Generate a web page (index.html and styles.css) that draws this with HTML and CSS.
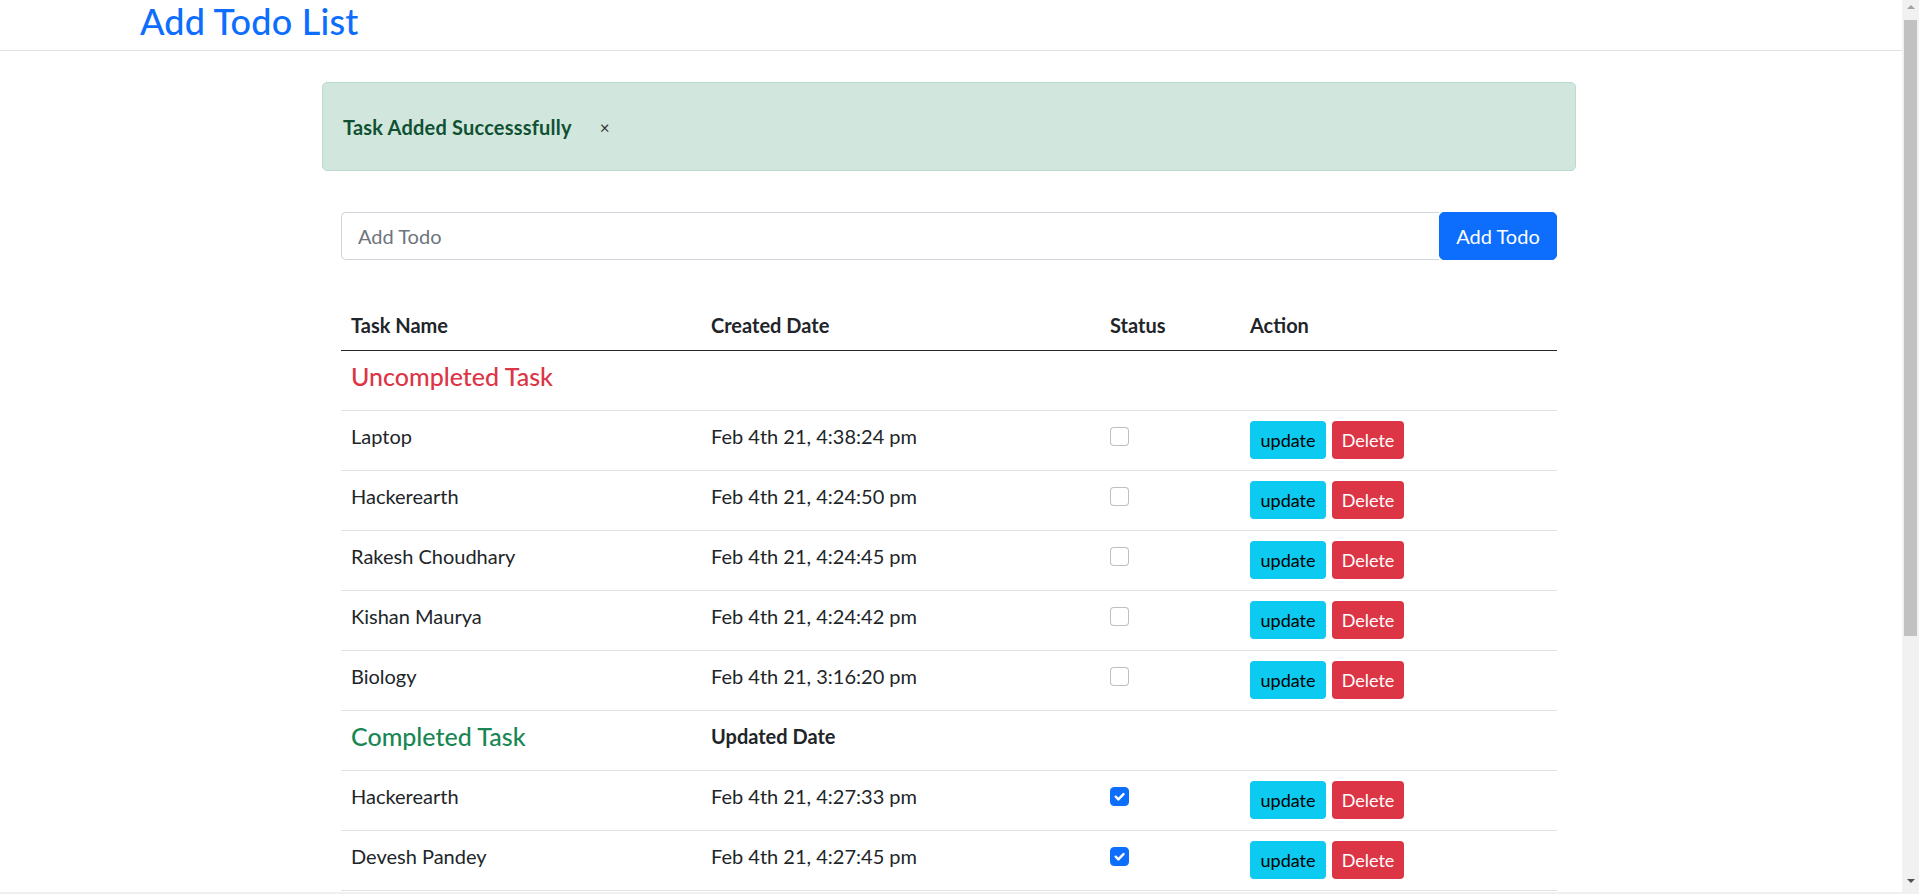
FILE: index.html
```html
<!DOCTYPE html>
<html lang="en">
<head>
<meta charset="utf-8">
<title>Add Todo List</title>
<link rel="stylesheet" href="styles.css">
</head>
<body>
<div class="window">
  <div class="viewport">
    <header class="topbar">
      <h1 class="brand">Add Todo List</h1>
    </header>
    <main class="container">
      <div class="alert">
        <strong>Task Added Successsfully</strong>
        <button class="alert-close" type="button">×</button>
      </div>
      <div class="inner">
        <form class="input-group">
          <input class="form-control" type="text" placeholder="Add Todo">
          <button class="btn-add" type="button">Add Todo</button>
        </form>
        <table class="table">
          <colgroup>
            <col class="c-name"><col class="c-date"><col class="c-status"><col class="c-action">
          </colgroup>
          <thead>
            <tr><th>Task Name</th><th>Created Date</th><th>Status</th><th>Action</th></tr>
          </thead>
          <tbody>
            <tr class="section"><td colspan="4"><h5 class="sec-title red">Uncompleted Task</h5></td></tr>
            <tr><td>Laptop</td><td>Feb 4th 21, 4:38:24 pm</td><td><span class="check"></span></td><td><div class="actions"><button class="btn btn-info">update</button><button class="btn btn-danger">Delete</button></div></td></tr>
            <tr><td>Hackerearth</td><td>Feb 4th 21, 4:24:50 pm</td><td><span class="check"></span></td><td><div class="actions"><button class="btn btn-info">update</button><button class="btn btn-danger">Delete</button></div></td></tr>
            <tr><td>Rakesh Choudhary</td><td>Feb 4th 21, 4:24:45 pm</td><td><span class="check"></span></td><td><div class="actions"><button class="btn btn-info">update</button><button class="btn btn-danger">Delete</button></div></td></tr>
            <tr><td>Kishan Maurya</td><td>Feb 4th 21, 4:24:42 pm</td><td><span class="check"></span></td><td><div class="actions"><button class="btn btn-info">update</button><button class="btn btn-danger">Delete</button></div></td></tr>
            <tr><td>Biology</td><td>Feb 4th 21, 3:16:20 pm</td><td><span class="check"></span></td><td><div class="actions"><button class="btn btn-info">update</button><button class="btn btn-danger">Delete</button></div></td></tr>
            <tr class="section"><td><h5 class="sec-title green">Completed Task</h5></td><td class="sub-head">Updated Date</td><td></td><td></td></tr>
            <tr><td>Hackerearth</td><td>Feb 4th 21, 4:27:33 pm</td><td><span class="check checked"><svg viewBox="0 0 20 20" width="19" height="19"><path d="M6 10.2l2.8 2.8l5.4-5.6" fill="none" stroke="#fff" stroke-width="2.6" stroke-linecap="round" stroke-linejoin="round"/></svg></span></td><td><div class="actions"><button class="btn btn-info">update</button><button class="btn btn-danger">Delete</button></div></td></tr>
            <tr><td>Devesh Pandey</td><td>Feb 4th 21, 4:27:45 pm</td><td><span class="check checked"><svg viewBox="0 0 20 20" width="19" height="19"><path d="M6 10.2l2.8 2.8l5.4-5.6" fill="none" stroke="#fff" stroke-width="2.6" stroke-linecap="round" stroke-linejoin="round"/></svg></span></td><td><div class="actions"><button class="btn btn-info">update</button><button class="btn btn-danger">Delete</button></div></td></tr>
          </tbody>
        </table>
      </div>
    </main>
  </div>
  <div class="scrollbar">
    <span class="arrow-up"></span>
    <span class="thumb"></span>
    <span class="track-fill"></span>
    <span class="arrow-down"></span>
  </div>
</div>
<div class="hbar"></div>
</body>
</html>
```

FILE: styles.css
```css
* { box-sizing: border-box; }

html, body {
  margin: 0;
  height: 100%;
}

body {
  display: flex;
  flex-direction: column;
  overflow: hidden;
  font-family: "Segoe UI", Lato, "Open Sans", sans-serif;
  font-size: 20px;
  line-height: 30px;
  color: #212529;
  background: #fff;
}

.window {
  flex: 1;
  min-height: 0;
  display: flex;
}

.viewport {
  flex: 1;
  min-width: 0;
  overflow: hidden;
}

/* header */
.topbar {
  height: 51px;
  border-bottom: 1px solid #dee2e6;
  padding-left: 140px;
}

.brand {
  margin: 0;
  font-size: 36px;
  line-height: 42px;
  font-weight: 500;
  color: #0d6efd;
  letter-spacing: 0.2px;
}

/* main */
.container {
  width: 1254px;
  margin: 31px 0 0 calc(50% - 629px);
}

.alert {
  height: 89px;
  display: flex;
  align-items: center;
  padding: 0 20px;
  background: #d1e7dd;
  border: 1px solid #badbcc;
  border-radius: 5px;
  color: #0f5132;
  font-size: 20px;
}

.alert strong {
  font-weight: 700;
  letter-spacing: 0.2px;
}

.alert-close {
  margin-left: 28px;
  margin-top: 3px;
  padding: 0;
  border: 0;
  background: none;
  font-family: inherit;
  font-size: 17px;
  line-height: 20px;
  color: #333;
}

.inner {
  padding: 0 19px;
}

.input-group {
  display: flex;
  height: 48px;
  margin: 41px 0 0;
}

.form-control {
  flex: 1;
  min-width: 0;
  height: 48px;
  padding: 0 16px;
  border: 1px solid #ced4da;
  border-right: 0;
  border-radius: 5px 0 0 5px;
  font-family: inherit;
  font-size: 20px;
  color: #212529;
  outline: none;
}

.form-control::placeholder { color: #6c757d; }

.btn-add {
  width: 118px;
  height: 48px;
  border: 1px solid #0d6efd;
  border-radius: 5px;
  background: #0d6efd;
  color: #fff;
  font-family: inherit;
  font-size: 20px;
  padding: 0;
}

/* table */
.table {
  width: 1216px;
  margin-top: 40px;
  border-collapse: collapse;
  table-layout: fixed;
}

.c-name { width: 360px; }
.c-date { width: 399px; }
.c-status { width: 140px; }
.c-action { width: 317px; }

.table th {
  text-align: left;
  font-weight: 700;
  padding: 10px;
  line-height: 30px;
  border-bottom: 1px solid #212529;
}

.table td {
  padding: 10px 10px 11px;
  vertical-align: top;
  line-height: 30px;
  border-bottom: 1px solid #dee2e6;
}

.section td {
  padding: 10px 10px 9px;
}

.sec-title {
  margin: 0 0 10px;
  font-size: 25px;
  line-height: 30px;
  font-weight: 500;
}

.red { color: #dc3545; }
.green { color: #198754; }

.table td.sub-head {
  font-weight: 700;
}

.check {
  display: block;
  width: 19px;
  height: 19px;
  margin-top: 6px;
  border: 1px solid rgba(0, 0, 0, 0.25);
  border-radius: 4px;
  background: #fff;
}

.check.checked {
  background: #0d6efd;
  border-color: #0d6efd;
}

.check svg {
  display: block;
  margin: -1px;
}

.actions {
  display: flex;
  gap: 6px;
}

.btn {
  height: 38px;
  border: 0;
  border-radius: 4px;
  padding: 0;
  font-family: inherit;
  font-size: 18px;
  line-height: 38px;
}

.btn-info {
  width: 76px;
  background: #0dcaf0;
  color: #000;
}

.btn-danger {
  width: 72px;
  background: #dc3545;
  color: #fff;
}

/* scrollbar */
.scrollbar {
  width: 17px;
  background: #f1f1f1;
  display: flex;
  flex-direction: column;
  align-items: center;
}

.arrow-up {
  margin-top: 5px;
  width: 0;
  height: 0;
  border-left: 4.5px solid transparent;
  border-right: 4.5px solid transparent;
  border-bottom: 4px solid #a3a3a3;
}

.thumb {
  margin-top: 11px;
  width: 13px;
  height: 616px;
  background: #c1c1c1;
}

.track-fill { flex: 1; }

.arrow-down {
  margin-bottom: 9px;
  width: 0;
  height: 0;
  border-left: 4.5px solid transparent;
  border-right: 4.5px solid transparent;
  border-top: 4px solid #505050;
}

.hbar {
  height: 2px;
  background: #f0f0f0;
}
```
